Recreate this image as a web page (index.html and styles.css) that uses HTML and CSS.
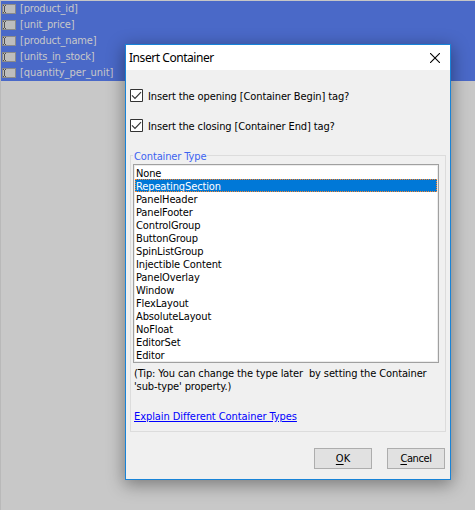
FILE: index.html
```html
<!DOCTYPE html>
<html lang="en">
<head>
<meta charset="utf-8">
<title>Insert Container</title>
<link rel="stylesheet" href="styles.css">
</head>
<body>
<svg class="defs" width="0" height="0">
  <symbol id="field" viewBox="0 0 14 10">
    <path d="M0 0h14v10H0z" fill="#8a8a8a"/>
    <path d="M1 1h12v8H1z" fill="#bdbdbd"/>
    <path d="M1 1.5h1M3 1.5h1M2.5 2v6M1 8.5h1M3 8.5h1" stroke="#505050" fill="none"/>
  </symbol>
  <symbol id="check" viewBox="0 0 13 13">
    <path d="M.5.5h12v12H.5z" fill="#fff" stroke="#333"/>
    <path d="M2 6.3l3 3L11 3.2" fill="none" stroke="#333" stroke-width="1.2"/>
  </symbol>
</svg>
<ul class="fields">
  <li><svg><use href="#field"/></svg><span>[product_id]</span></li>
  <li><svg><use href="#field"/></svg><span>[unit_price]</span></li>
  <li><svg><use href="#field"/></svg><span>[product_name]</span></li>
  <li><svg><use href="#field"/></svg><span>[units_in_stock]</span></li>
  <li><svg><use href="#field"/></svg><span class="wide">[quantity_per_unit]</span></li>
</ul>
<div class="dialog">
  <header><h1>Insert Container</h1>
    <svg class="close" viewBox="0 0 10 10"><path d="M0 0l10 10M10 0L0 10" stroke="#000" stroke-width="1.1"/></svg>
  </header>
  <div class="checks">
    <label><svg><use href="#check"/></svg><span>Insert the opening [Container Begin] tag?</span></label>
    <label><svg><use href="#check"/></svg><span>Insert the closing [Container End] tag?</span></label>
  </div>
  <section class="group">
    <h2><span>Container Type</span></h2>
    <ul class="types">
      <li>None</li>
      <li class="selected">RepeatingSection</li>
      <li>PanelHeader</li>
      <li>PanelFooter</li>
      <li>ControlGroup</li>
      <li>ButtonGroup</li>
      <li>SpinListGroup</li>
      <li>Injectible Content</li>
      <li>PanelOverlay</li>
      <li>Window</li>
      <li>FlexLayout</li>
      <li>AbsoluteLayout</li>
      <li>NoFloat</li>
      <li>EditorSet</li>
      <li>Editor</li>
    </ul>
    <p class="tip">(Tip: You can change the type later&nbsp; by setting the Container<br>'sub-type' property.)</p>
    <a class="link">Explain Different Container Types</a>
  </section>
  <footer>
    <button><u>O</u>K</button>
    <button class="cancel"><u>C</u>ancel</button>
  </footer>
</div>
</body>
</html>
```
FILE: styles.css
```css
* { box-sizing: border-box; margin: 0; padding: 0; }
body {
  width: 475px; height: 510px; overflow: hidden; background: #c8c8c8;
  border-left: 1px solid #b9b9b9; border-top: 1px solid #c6c6c6;
  font: 11px/13px "DejaVu Sans Condensed", "DejaVu Sans", sans-serif;
  font-stretch: condensed; color: #000; white-space: nowrap; letter-spacing: -.12px;
}
ul { list-style: none; }
.defs { position: absolute; }
.fields { background: #4a69c8; color: #c8c8c8; height: 80px; letter-spacing: -.17px; }
.fields li { display: flex; align-items: center; height: 16px; padding-left: 1px; gap: 4px; }
.fields svg { width: 14px; height: 10px; }
.fields span { margin-top: -1px; }
.fields .wide { letter-spacing: -.06px; }
.dialog {
  position: absolute; left: 125px; top: 44px; width: 326px; height: 436px;
  background: #f0f0f0; border: 1px solid #1883d7;
  box-shadow: 0 4px 16px 1px rgba(0,0,0,.38);
  display: flex; flex-direction: column;
}
header { height: 25px; background: #fff; display: flex; align-items: center; justify-content: space-between; padding: 0 10px 0 3px; }
h1 { font: 12px/16px "Noto Sans", "Open Sans", sans-serif; letter-spacing: -.45px; }
.close { width: 10px; height: 10px; }
.checks { padding: 11px 4px 0; height: 85px; }
.checks label { display: flex; align-items: center; height: 30px; gap: 5px; }
.checks svg { width: 13px; height: 13px; margin-bottom: 1px; }
.group { border: 1px solid #dcdcdc; height: 277px; margin: 0 4px; padding: 0 6px 0 2px; }
h2 { font: inherit; color: #3c64f0; height: 8px; display: flex; }
h2 span { background: #f0f0f0; height: 13px; margin-top: -6px; padding: 0 1px; }
.types { width: 306px; height: 199px; border: 1px solid #a0a0a0; background: #fff; padding: 1px; box-shadow: inset 0 0 0 1px #ececec; }
.types li { height: 13px; line-height: 15px; padding-left: 1px; }
.types .selected { background: #0078d7; color: #fff; outline: 1px dotted #ff8728; outline-offset: -1px; }
.tip { margin-top: 4px; padding-left: 1px; }
.link { display: inline-block; margin: 17px 0 0 1px; color: #00f; text-decoration: underline; letter-spacing: -.07px; }
footer { display: flex; justify-content: flex-end; gap: 15px; padding: 16px 5px 0; }
button { width: 58px; height: 21px; background: #e1e1e1; border: 1px solid #adadad; font: inherit; color: #000; }
.cancel { letter-spacing: -.4px; }
u { text-underline-offset: 2px; }
```
